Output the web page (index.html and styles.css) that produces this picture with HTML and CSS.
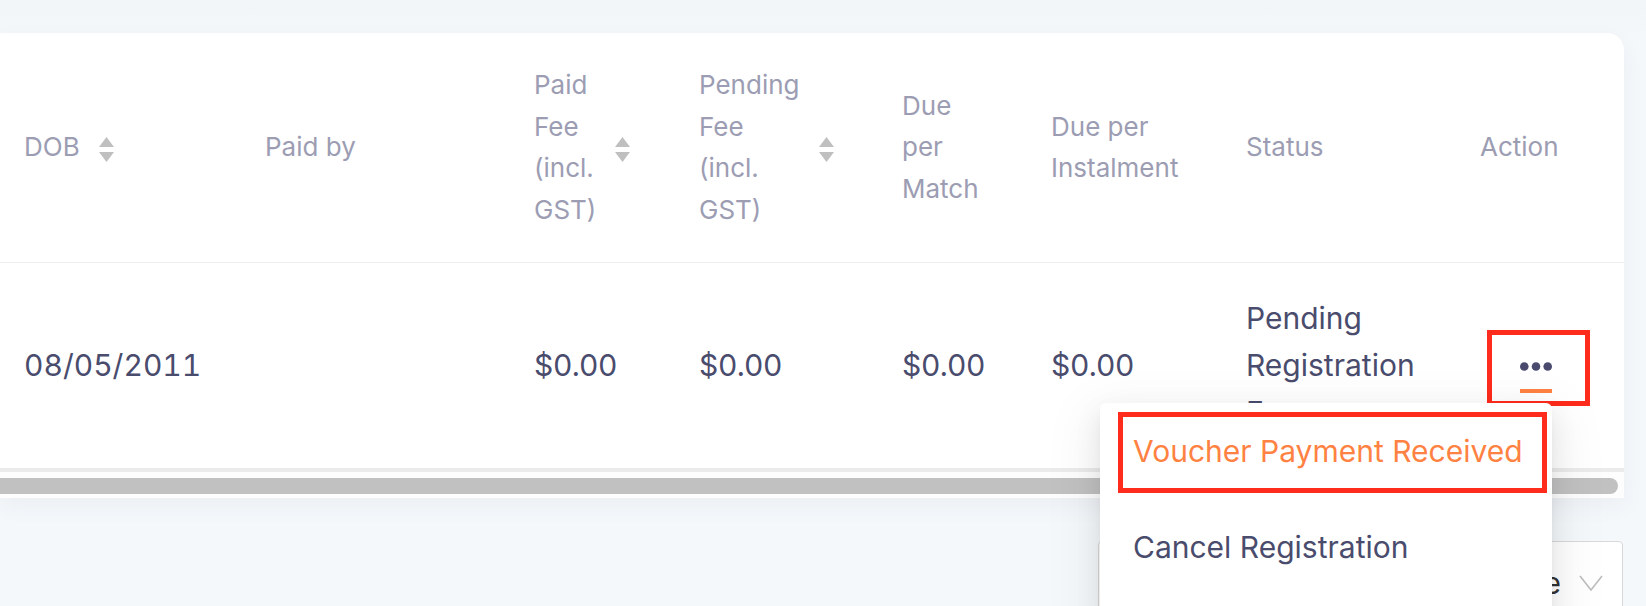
FILE: index.html
```html
<!DOCTYPE html>
<html lang="en">
<head>
    <meta charset="UTF-8">
    <title>Registrations</title>
    <link rel="stylesheet" href="styles.css">
</head>
<body>
<div class="page">
    <div class="card">
        <table class="reg-table">
            <colgroup>
                <col class="c-dob">
                <col class="c-paidby">
                <col class="c-paid">
                <col class="c-pending">
                <col class="c-match">
                <col class="c-inst">
                <col class="c-status">
                <col class="c-action">
            </colgroup>
            <thead>
            <tr>
                <th>
                    <div class="th-inner">
                        <span class="th-title">DOB</span>
                        <svg class="sorter" width="15" height="25" viewBox="0 0 15 25"><polygon points="0,10 7.5,0 15,10"/><polygon points="0,15 15,15 7.5,25"/></svg>
                    </div>
                </th>
                <th>Paid by</th>
                <th>
                    <div class="th-inner">
                        <span class="th-title">Paid Fee (incl. GST)</span>
                        <svg class="sorter" width="15" height="25" viewBox="0 0 15 25"><polygon points="0,10 7.5,0 15,10"/><polygon points="0,15 15,15 7.5,25"/></svg>
                    </div>
                </th>
                <th>
                    <div class="th-inner">
                        <span class="th-title">Pending Fee (incl. GST)</span>
                        <svg class="sorter" width="15" height="25" viewBox="0 0 15 25"><polygon points="0,10 7.5,0 15,10"/><polygon points="0,15 15,15 7.5,25"/></svg>
                    </div>
                </th>
                <th>Due per Match</th>
                <th>Due per Instalment</th>
                <th>Status</th>
                <th>Action</th>
            </tr>
            </thead>
            <tbody>
            <tr>
                <td class="num">08/05/2011</td>
                <td></td>
                <td>$0.00</td>
                <td>$0.00</td>
                <td>$0.00</td>
                <td>$0.00</td>
                <td>Pending Registration Fee</td>
                <td>
                    <div class="more-btn">
                        <svg class="dots" width="32" height="9" viewBox="0 0 32 9">
                            <circle cx="4.3" cy="4.5" r="4.3"/>
                            <circle cx="16" cy="4.5" r="4.3"/>
                            <circle cx="27.7" cy="4.5" r="4.3"/>
                        </svg>
                        <span class="underline"></span>
                        <span class="mark mark-btn"></span>

                        <ul class="menu">
                            <li class="active">Voucher Payment Received<span class="mark mark-item"></span></li>
                            <li>Cancel Registration</li>
                        </ul>
                    </div>
                </td>
            </tr>
            </tbody>
        </table>
        <div class="scrollbar"><div class="thumb"></div></div>
    </div>

    <div class="pager">
        <div class="size-select">
            <span>10 / page</span>
            <svg class="chevron" width="24" height="16" viewBox="0 0 24 16">
                <polyline points="1,1 12,15 23,1"/>
            </svg>
        </div>
    </div>
</div>
</body>
</html>
```

FILE: styles.css
```css
* {
    padding: 0;
    margin: 0;
    list-style: none;
    box-sizing: border-box;
}

body {
    background: #f4f7fa;
    font-family: Inter, "Noto Sans", sans-serif;
    overflow: hidden;
}

.page {
    padding-top: 33px;
    width: 1646px;
    height: 606px;
    background: linear-gradient(#f2f5f8, #f5f8fb 40px);
}

.card {
    width: 1624px;
    background: #fff;
    border-top-right-radius: 17px;
    box-shadow: 0 8px 22px rgba(40, 50, 70, 0.05);
    position: relative;
}

.reg-table {
    width: 1624px;
    table-layout: fixed;
    border-collapse: collapse;
}

.c-dob { width: 235px; }
.c-paidby { width: 269px; }
.c-paid { width: 165px; }
.c-pending { width: 203px; }
.c-match { width: 149px; }
.c-inst { width: 195px; }
.c-status { width: 234px; }
.c-action { width: 174px; }

.reg-table th {
    padding: 31px 30px 32px;
    font-size: 26px;
    line-height: 41.5px;
    font-weight: 400;
    color: #9c9db3;
    text-align: left;
    vertical-align: middle;
    border-bottom: 1px solid #efefef;
}

.reg-table td {
    padding: 32px 30px;
    height: 205px;
    font-size: 30px;
    line-height: 47px;
    color: #4a4c6d;
    vertical-align: middle;
}

.reg-table td.num {
    font-variant-numeric: tabular-nums;
}

.reg-table th:first-child,
.reg-table td:first-child {
    padding-left: 24px;
}

.th-inner {
    display: flex;
    align-items: center;
    gap: 19px;
}

/* one word per line, sorter sits right after the longest one */
.th-title {
    width: min-content;
}

.sorter {
    flex: none;
    display: block;
    fill: #bfbfbf;
    margin-top: 4px;
}

.more-btn {
    position: relative;
    width: 32px;
    margin-left: 40px;
    padding-top: 24px;
    cursor: pointer;
}

.dots {
    display: block;
    fill: #4a4a6e;
}

.underline {
    display: block;
    height: 4px;
    margin-top: 18px;
    background: #ff8242;
}

.mark {
    position: absolute;
    border: 5px solid #ff2b1c;
    pointer-events: none;
}

.mark-btn {
    left: -33px;
    top: -8px;
    width: 103px;
    height: 76px;
}

.menu {
    position: absolute;
    right: 0;
    top: 65px;
    width: 452px;
    height: 220px;
    background: #fff;
    border-radius: 6px;
    box-shadow: 0 10px 28px rgba(0, 0, 0, 0.08), 0 4px 10px -6px rgba(0, 0, 0, 0.12), 0 16px 50px 14px rgba(0, 0, 0, 0.05);
    z-index: 2;
}

.menu li {
    position: relative;
    height: 96px;
    padding: 0 33px;
    font-size: 30px;
    line-height: 96px;
    color: #4a4c6d;
    white-space: nowrap;
}

.menu li.active {
    color: #ff8242;
}

.mark-item {
    left: 18px;
    right: 5px;
    top: 9px;
    bottom: 6px;
}

.scrollbar {
    border-top: 4px solid #ebebeb;
    padding: 6px 6px 4px 0;
    background: #fdfdfd;
}

.thumb {
    height: 16px;
    background: #c1c1c1;
    border-radius: 0 8px 8px 0;
}

.pager {
    display: flex;
    justify-content: flex-end;
    width: 1624px;
    margin-top: 43px;
}

.size-select {
    display: flex;
    align-items: center;
    justify-content: flex-end;
    gap: 18px;
    width: 525px;
    height: 84px;
    padding-right: 19px;
    margin-right: 1px;
    background: #fff;
    border: 1px solid #d9d9d9;
    border-radius: 4px;
    font-size: 30px;
    color: #333;
}

.chevron {
    fill: none;
    stroke: #bdbdbd;
    stroke-width: 1.6;
}
```
